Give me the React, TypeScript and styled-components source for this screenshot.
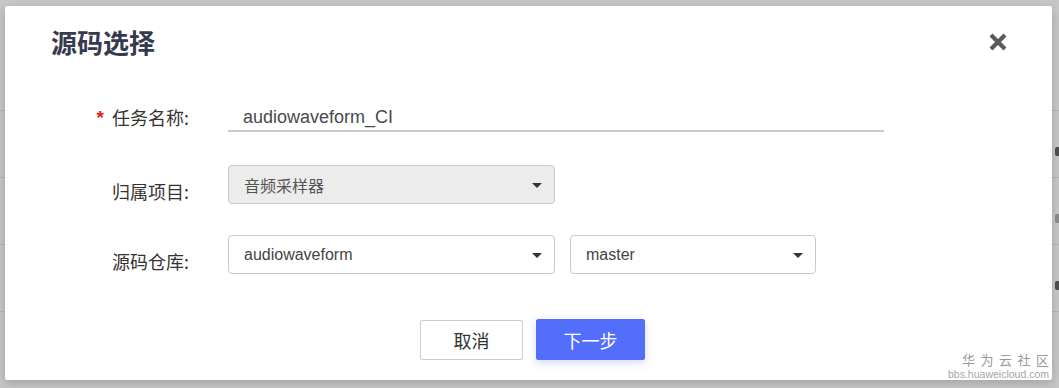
import React from "react";
import styled, { createGlobalStyle } from "styled-components";

const GlobalStyle = createGlobalStyle`
  html, body { margin: 0; padding: 0; }
  body {
    width: 1059px;
    height: 388px;
    overflow: hidden;
    font-family: "Liberation Sans", "Noto Sans CJK SC", Arial, sans-serif;
    background: #c6c6c6;
  }
  * { box-sizing: border-box; }
`;

const Page = styled.div`
  position: relative;
  width: 1059px;
  height: 388px;
  overflow: hidden;
  background: #c6c6c6;
`;

const Backdrop = styled.div`
  display: flex;
  flex-direction: column;
  padding-top: 110px;
`;

const BackdropRow = styled.div`
  height: 67px;
  border-top: 1px solid #b3b3b3;
  display: flex;
  justify-content: flex-end;
  align-items: flex-start;
  padding-top: 36px;
`;

const RowMark = styled.span<{ $tone: string }>`
  width: 8px;
  height: 9px;
  margin-right: -4px;
  border-radius: 2px;
  background: ${(p) => p.$tone};
`;

const Dialog = styled.div`
  position: absolute;
  left: 5px;
  top: 6px;
  width: 1047px;
  height: 374px;
  background: #ffffff;
  border-radius: 2px;
  box-shadow: 0 3px 10px rgba(0, 0, 0, 0.18);
  display: flex;
  flex-direction: column;
`;

const Header = styled.div`
  height: 72px;
  display: flex;
  align-items: center;
  justify-content: space-between;
  padding: 0 44px 0 46px;
`;

const Title = styled.h2`
  margin: 0;
  font-family: "Noto Sans CJK SC", sans-serif;
  font-weight: 700;
  font-size: 26px;
  line-height: 30px;
  color: #363a4f;
`;

const CloseButton = styled.button`
  width: 20px;
  height: 20px;
  padding: 0;
  border: 0;
  background: transparent;
  display: flex;
  align-items: center;
  justify-content: center;
  cursor: pointer;
`;

const Form = styled.div`
  display: flex;
  flex-direction: column;
`;

const FieldRow = styled.div<{ $top: number; $h: number }>`
  display: flex;
  align-items: center;
  margin-top: ${(p) => p.$top}px;
  height: ${(p) => p.$h}px;
`;

const Label = styled.label<{ $shift: number }>`
  width: 184px;
  flex: none;
  text-align: right;
  font-family: "Noto Sans CJK SC", sans-serif;
  font-size: 18px;
  color: #333333;
  line-height: 24px;
  padding-top: ${(p) => p.$shift}px;
  margin-right: 39px;
`;

const Required = styled.span`
  color: #e51c23;
  font-family: "Liberation Sans", sans-serif;
  font-weight: 700;
  font-size: 19px;
  margin-right: 8px;
  position: relative;
  top: -1px;
`;

const TextInput = styled.input`
  align-self: flex-end;
  width: 656px;
  height: 28px;
  border: 0;
  border-bottom: 2px solid #cacaca;
  padding: 0 0 0 15px;
  outline: none;
  font-family: "Liberation Sans", sans-serif;
  font-size: 18px;
  color: #4a4a4a;
  background: transparent;
`;

const Controls = styled.div`
  display: flex;
  gap: 15px;
`;

const Select = styled.div<{ $w: number; $disabled?: boolean }>`
  width: ${(p) => p.$w}px;
  height: 39px;
  border: 1px solid #c9c9c9;
  border-radius: 4px;
  background: ${(p) => (p.$disabled ? "#ececec" : "#ffffff")};
  display: flex;
  align-items: center;
  justify-content: space-between;
  padding: 0 12px 0 15px;
  font-family: "Liberation Sans", "Noto Sans CJK SC", sans-serif;
  font-size: 16px;
  color: ${(p) => (p.$disabled ? "#555555" : "#444444")};
`;

const Caret = styled.span`
  width: 0;
  height: 0;
  border-left: 5px solid transparent;
  border-right: 5px solid transparent;
  border-top: 5px solid #333333;
  margin-top: 2px;
`;

const Footer = styled.div`
  margin-top: 46px;
  display: flex;
  justify-content: center;
  gap: 13px;
  padding-left: 8px;
`;

const Button = styled.button<{ $primary?: boolean; $w: number }>`
  width: ${(p) => p.$w}px;
  height: ${(p) => (p.$primary ? 41 : 40)}px;
  margin-top: ${(p) => (p.$primary ? -1 : 0)}px;
  border-radius: 2px;
  border: 1px solid ${(p) => (p.$primary ? "#526efa" : "#cccccc")};
  background: ${(p) => (p.$primary ? "#526efa" : "#ffffff")};
  color: ${(p) => (p.$primary ? "#ffffff" : "#333333")};
  font-family: "Noto Sans CJK SC", sans-serif;
  font-size: 18px;
  box-shadow: ${(p) => (p.$primary ? "0 3px 8px rgba(82, 110, 250, 0.25)" : "none")};
  cursor: pointer;
`;

const Watermark = styled.div`
  position: absolute;
  right: 10px;
  bottom: 9px;
  display: flex;
  flex-direction: column;
  align-items: flex-end;
  color: #9a9a9a;
  line-height: 1;
`;

const WatermarkTitle = styled.span`
  font-family: "Noto Sans CJK SC", sans-serif;
  font-size: 13px;
  letter-spacing: 5.5px;
  margin-right: -5.5px;
  margin-bottom: 3px;
`;

const WatermarkUrl = styled.span`
  font-family: "Liberation Sans", sans-serif;
  font-size: 10.5px;
  color: #a5a5a5;
`;

export default function App() {
  return (
    <>
      <GlobalStyle />
      <Page>
        <Backdrop>
          <BackdropRow>
            <RowMark $tone="#4d4d4d" />
          </BackdropRow>
          <BackdropRow>
            <RowMark $tone="#8a8a8a" />
          </BackdropRow>
          <BackdropRow>
            <RowMark $tone="#4d4d4d" />
          </BackdropRow>
          <BackdropRow />
        </Backdrop>
        <Dialog>
          <Header>
            <Title>源码选择</Title>
            <CloseButton aria-label="关闭">
              <svg width="20" height="20" viewBox="0 0 20 20">
                <path
                  d="M3 3 L17 17 M17 3 L3 17"
                  stroke="#5a5a5a"
                  strokeWidth="4.2"
                  strokeLinecap="butt"
                />
              </svg>
            </CloseButton>
          </Header>
          <Form>
            <FieldRow $top={14} $h={40}>
              <Label $shift={12}>
                <Required>*</Required>任务名称:
              </Label>
              <TextInput defaultValue="audiowaveform_CI" />
            </FieldRow>
            <FieldRow $top={33} $h={39}>
              <Label $shift={12}>归属项目:</Label>
              <Controls>
                <Select $w={327} $disabled>
                  <span>音频采样器</span>
                  <Caret />
                </Select>
              </Controls>
            </FieldRow>
            <FieldRow $top={31} $h={39}>
              <Label $shift={12}>源码仓库:</Label>
              <Controls>
                <Select $w={327}>
                  <span>audiowaveform</span>
                  <Caret />
                </Select>
                <Select $w={246}>
                  <span>master</span>
                  <Caret />
                </Select>
              </Controls>
            </FieldRow>
          </Form>
          <Footer>
            <Button $w={103}>取消</Button>
            <Button $w={109} $primary>
              下一步
            </Button>
          </Footer>
        </Dialog>
        <Watermark>
          <WatermarkTitle>华为云社区</WatermarkTitle>
          <WatermarkUrl>bbs.huaweicloud.com</WatermarkUrl>
        </Watermark>
      </Page>
    </>
  );
}
